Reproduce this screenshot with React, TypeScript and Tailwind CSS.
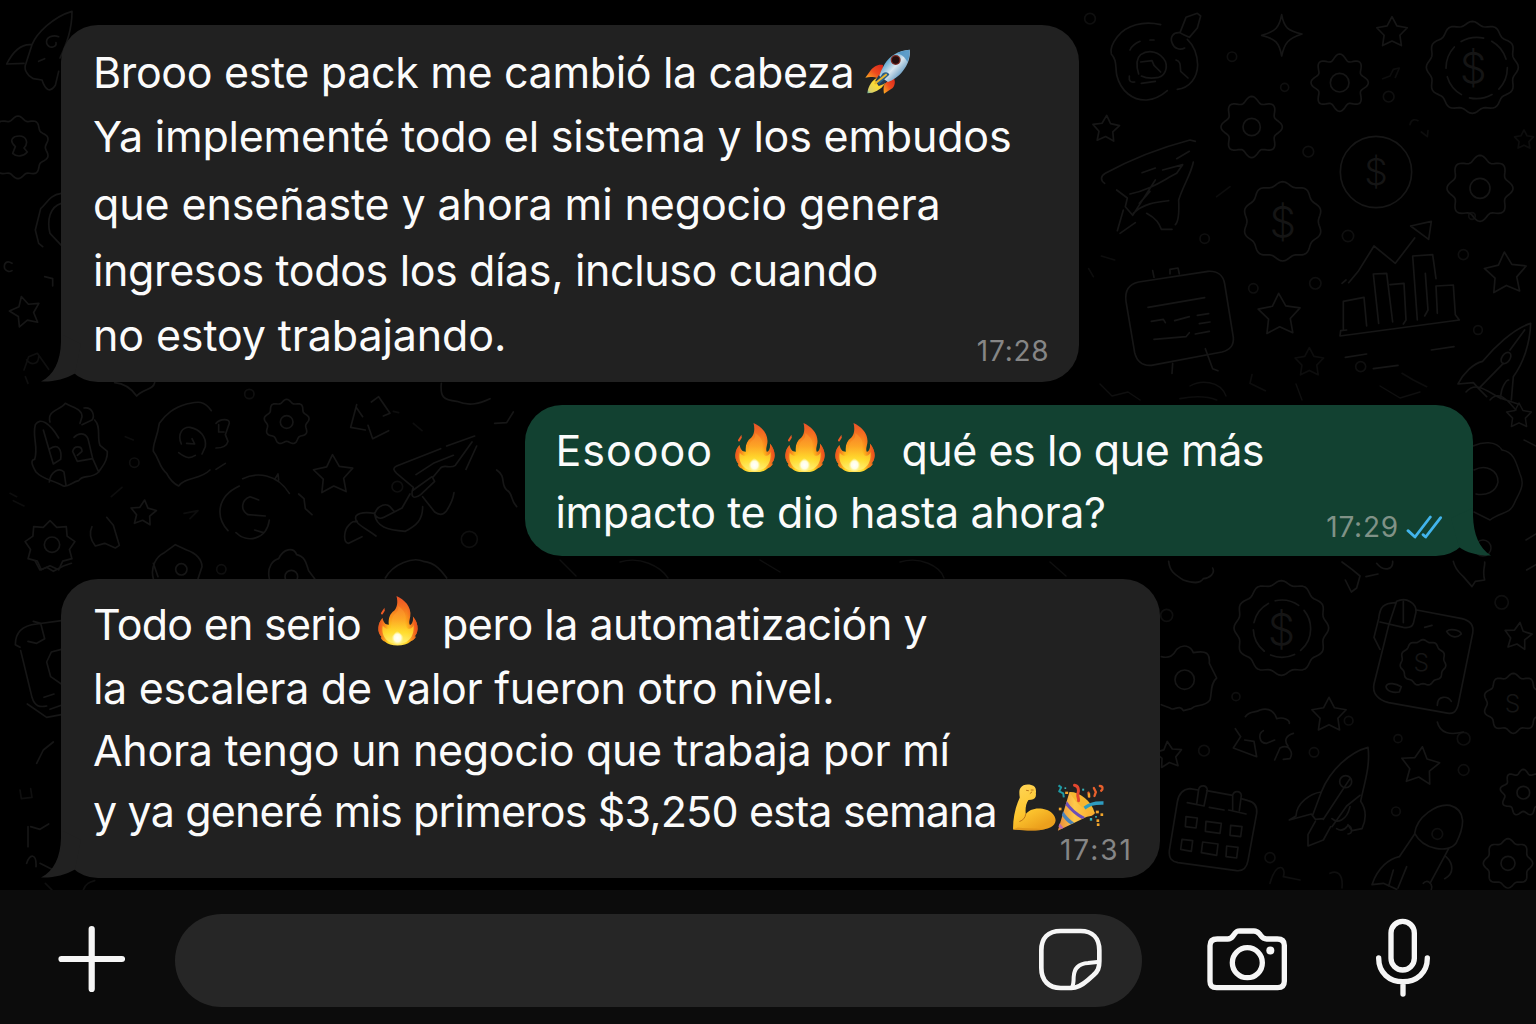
import React, { type ReactNode } from "react";

/* ---------- Wallpaper doodles ---------- */

function wavyPath(cx: number, cy: number, r: number, lobes: number, depth: number) {
  const pts: string[] = [];
  for (let i = 0; i < 120; i++) {
    const t = (i / 120) * Math.PI * 2;
    const rr = r - depth + depth * Math.cos(lobes * (t + Math.PI / 2));
    pts.push((cx + rr * Math.cos(t)).toFixed(1) + " " + (cy + rr * Math.sin(t)).toFixed(1));
  }
  return "M" + pts.join("L") + "Z";
}

function starPath(cx: number, cy: number, r: number, tips = 5, inner = 0.52, turn = 0) {
  const pts: string[] = [];
  for (let i = 0; i < tips * 2; i++) {
    const t = -Math.PI / 2 + turn + (i * Math.PI) / tips;
    const rr = i % 2 ? r * inner : r;
    pts.push((cx + rr * Math.cos(t)).toFixed(1) + " " + (cy + rr * Math.sin(t)).toFixed(1));
  }
  return "M" + pts.join("L") + "Z";
}

type GearProps = { x: number; y: number; r: number; hole?: number; n?: number; d?: number };
const Gear = ({ x, y, r, hole = 0, n = 8, d = 7 }: GearProps) => (
  <>
    <path d={wavyPath(x, y, r, n, d)} />
    {hole > 0 && <circle cx={x} cy={y} r={hole} />}
  </>
);

type StarProps = { x: number; y: number; r: number; turn?: number };
const Star = ({ x, y, r, turn = 0 }: StarProps) => <path d={starPath(x, y, r, 5, 0.52, turn)} />;

const Dollar = ({ x, y, s }: { x: number; y: number; s: number }) => (
  <text x={x} y={y + s * 0.36} fontSize={s} textAnchor="middle" fontFamily="Inter, sans-serif" fontWeight="300" fill="#151515" stroke="none">
    $
  </text>
);

const Dots = ({ at }: { at: [number, number, number][] }) => (
  <g opacity="0.7">
    {at.map(([x, y, r]) => (
      <circle key={x + "-" + y} cx={x} cy={y} r={r} />
    ))}
  </g>
);

function Wallpaper() {
  return (
    <svg className="absolute inset-0 h-full w-full" viewBox="0 0 1536 890" fill="none" stroke="#161616" strokeWidth="5" strokeLinejoin="round" strokeLinecap="round" aria-hidden="true">
      {/* upper right */}
      <g transform="translate(1080 0) scale(.33333)">
        <path d="M242 74C190 62 140 75 112 110C98 128 90 148 94 162C110 180 106 195 110 225C122 275 160 302 200 300C230 298 248 284 262 272M292 268C330 264 352 232 353 195C352 160 340 135 322 118" />
        <path d="M300 98L318 52L352 40L362 48L352 84L328 112C312 104 305 102 300 98C278 96 270 112 276 128C282 146 300 152 314 144" />
        <path d="M150 150C156 136 166 130 180 124M210 120H222M176 222C168 196 168 176 182 164C208 146 240 156 256 184C264 206 254 226 236 232C216 236 196 234 184 228M182 186L216 182L222 196L242 216M148 228C146 244 152 248 164 246M184 250L226 244M288 180C304 184 300 200 302 214L324 234" />
        <path d="M605 44C612 84 624 92 666 102C624 116 614 128 605 168C598 128 586 116 545 106C588 94 598 82 605 44Z" />
        <Star x={936} y={98} r={48} />
        <Star x={78} y={388} r={42} turn={0.05} />
        <Star x={598} y={946} r={66} turn={-0.03} />
        <Star x={1277} y={822} r={66} turn={-0.06} />
        <g opacity="0.6">
          <Star x={688} y={1088} r={45} />
          <Star x={1332} y={420} r={30} />
        </g>
        <Gear x={779} y={248} r={86} hole={28} n={8} d={9} />
        <Gear x={515} y={381} r={92} hole={26} n={8} d={9} />
        <Gear x={1200} y={565} r={99} hole={30} n={8} d={9} />
        <Gear x={1177} y={202} r={138} n={12} d={6} />
        <circle cx="1190" cy="204" r="92" strokeDasharray="70 26" />
        <Dollar x={1180} y={204} s={128} />
        <Gear x={608} y={664} r={119} n={10} d={6} />
        <Dollar x={608} y={666} s={126} />
        <circle cx="888" cy="516" r="107" />
        <Dollar x={888} y={516} s={112} />
        {/* paper plane */}
        <path d="M74 550C60 540 62 528 76 520C160 474 246 442 330 420L346 424M340 486C334 520 308 560 296 600C298 640 296 664 286 674M110 570L142 594L136 620L158 646L226 540M150 582C210 570 250 540 290 520L308 494L248 510M186 518L226 504M290 476L328 454M160 640C190 610 230 606 266 602M200 640C230 656 238 672 244 688H276M112 692L130 630M120 700L166 668M178 610L210 574" />
        {/* speech board */}
        <path d="M176 846L384 814C412 812 430 826 434 852L460 1012C462 1036 450 1050 426 1056L214 1096C186 1098 170 1082 164 1058L138 904C134 872 148 852 176 846Z" />
        <path d="M204 922L374 893M214 964L250 958L256 968M284 962L328 950M352 946L386 941M358 971L390 966M222 1018L318 1010L328 998M346 1002L388 994M222 832L218 812M270 822V808L294 804L298 822M278 1090L276 1120M376 1046L398 1106L414 1112" />
        {/* growth chart */}
        <path d="M790 986L790 904L852 892L860 978M896 970L880 822L920 820L938 966M930 854L972 850L978 960L970 972M1012 960L998 768L1058 764L1068 836M1036 820L1044 930L1034 948M1072 940L1068 858L1120 855L1126 944L1138 960L780 1008L782 992L800 990" />
        <path d="M786 850L798 840M806 848L836 812L882 738L946 790L1004 714M992 678L1054 664L1046 718L992 678M796 1072L860 1062M880 1106L954 1096M1054 1050L1122 1040" />
        {/* rocket */}
        <path d="M1352 970C1300 986 1240 1044 1208 1084C1180 1090 1150 1120 1134 1152L1180 1148L1196 1166L1270 1090M1352 970C1350 1030 1330 1090 1300 1130L1294 1200M1196 1166L1220 1190M1262 1196C1262 1160 1280 1140 1286 1140M1334 990L1290 1050" />
        <ellipse cx="1278" cy="1074" rx="12" ry="19" transform="rotate(35 1278 1074)" />
        <Dots at={[[30, 56, 16], [456, 170, 14], [614, 262, 12], [926, 290, 16], [685, 455, 16], [804, 708, 17], [520, 865, 14], [706, 850, 17], [1150, 764, 15], [1194, 990, 13], [842, 1100, 15], [1176, 648, 10], [374, 716, 14]]} />
        <path opacity="0.6" d="M908 236L930 228L940 208L958 204L946 232M990 374C994 356 1006 358 1014 362M1024 396L1042 410L1044 392M516 1124L510 1150L556 1172M300 1196C340 1188 380 1188 410 1200M64 768L104 780M26 806L40 830M410 590L450 560M966 1120L1000 1140L1040 1160" />
      </g>

      {/* middle left */}
      <g transform="translate(0 380) scale(.33333)">
        <path d="M150 126C140 90 180 92 196 70C220 84 246 86 246 110L240 130M252 84C280 80 284 110 276 120L246 134M284 120C304 140 290 170 300 196L322 214C324 246 304 262 296 276C270 300 250 280 236 302C216 306 206 322 190 318C160 300 130 300 108 276C96 256 90 240 104 238C116 200 96 170 106 134C120 110 150 130 176 174M130 150L152 226L160 252L182 238C186 210 176 190 150 206M222 172C240 154 262 160 266 184L278 236L296 276M278 236L232 244L218 214C222 196 246 196 246 214L232 226M148 306C152 272 180 262 192 276L198 316" />
        <path d="M634 92C610 58 590 66 560 72C520 84 500 100 478 130C470 180 458 190 460 214C480 240 476 260 500 280C510 300 520 310 536 318C556 290 600 300 630 270" />
        <path d="M544 192C530 160 550 140 570 142C600 148 620 170 616 200L606 222M536 218C560 236 570 236 586 226M560 190L584 192L576 176M648 130C660 116 690 114 688 130L676 164L684 184C680 200 664 204 648 204M656 134V156H672M648 268L676 250" />
        <Gear x={860} y={126} r={68} hole={19} n={9} d={5} />
        <path d="M1114 66L1136 50L1170 100L1150 108M1070 74L1052 142L1096 150M1070 84L1088 110M1104 136L1118 176L1166 152" />
        <Star x={1000} y={286} r={62} turn={-0.04} />
        <Star x={430} y={400} r={40} turn={0.1} />
        <path d="M728 296C770 276 830 280 868 340M718 318C650 350 646 410 684 452M708 458C740 490 800 480 808 420M776 360L750 350C724 360 720 390 744 404L796 408M824 298L834 282L836 300M896 342L912 356L916 386L936 404M764 450L790 458" />
        {/* rocket */}
        <path d="M1424 168L1340 198M1322 206L1190 258C1176 264 1182 272 1190 280L1240 322C1230 350 1240 360 1262 344L1304 304L1296 290L1240 330M1416 186L1366 256C1350 268 1330 250 1320 266L1300 290M1430 198L1398 268M1268 350L1304 396C1320 408 1332 402 1340 392C1354 370 1360 354 1362 338M1248 284L1300 250L1360 226M1230 342L1206 384L1152 412C1136 420 1124 408 1124 398M1086 470L1046 490C1028 488 1032 450 1046 436C1058 424 1060 424 1072 424M1128 468C1090 440 1060 430 1068 408C1080 394 1110 398 1124 400C1136 372 1160 370 1170 380L1182 394M1124 404C1130 440 1160 450 1216 454C1250 436 1268 420 1268 380" />
        <path d={starPath(150, 498, 76, 9, 0.78)} />
        <circle cx="156" cy="494" r="23" />
        <path d="M320 412L340 436L358 496L346 504L314 490L286 498C272 480 266 460 276 440" />
        <path d="M460 596C450 560 470 530 490 520L526 494L560 510C590 520 606 540 606 560L594 596M808 596C800 560 820 540 836 536C850 506 880 500 890 524C920 530 920 560 926 572L944 596M1156 594C1180 550 1240 530 1270 544C1310 548 1330 580 1340 594M344 8C370 10 390 20 410 48C430 26 460 30 464 8M1324 10C1320 50 1330 60 1370 64C1410 80 1440 70 1470 56M1490 270C1520 290 1500 310 1520 330C1540 340 1530 360 1550 380M1484 130L1520 128L1540 96" />
        <circle cx="544" cy="568" r="17" />
        <circle cx="874" cy="590" r="19" />
        <Dots at={[[403, 248, 14], [748, 42, 14], [664, 568, 14], [1408, 478, 24], [1192, 320, 16]]} />
        <path opacity="0.6" d="M30 340L50 350M40 362L72 378M334 350L366 322M376 170L400 180M552 400L594 392L570 416M1240 130L1266 152M1180 94L1196 98" />
      </g>

      {/* lower right */}
      <g transform="translate(1150 560) scale(.33333)">
        <path d="M56 4C60 40 80 46 100 60C130 70 150 72 160 56C180 54 196 40 188 24M576 6L606 28L630 48L620 84L604 96L586 60M648 50L684 42M680 10C700 36 730 30 728 4M910 4C916 30 930 40 940 50L966 80L976 64L1004 60C996 30 1006 20 1004 6M1130 30L1158 14" />
        <Gear x={394} y={204} r={142} n={12} d={6} />
        <circle cx="396" cy="206" r="86" strokeDasharray="74 22" />
        <Dollar x={394} y={208} s={130} />
        <path d="M34 290C60 296 70 286 80 268C100 250 122 258 130 278C170 270 180 280 178 310L200 354C180 370 186 400 180 420C160 444 140 430 124 446L100 452C88 430 70 456 60 444L34 434" />
        <circle cx="104" cy="359" r="29" />
        {/* banknote and coin */}
        <path d="M800 150L936 176C962 182 972 198 968 220L924 436C918 458 908 464 884 458L716 428C684 420 666 400 672 372L716 196M716 196L740 124C770 110 800 130 798 156L790 190C786 204 774 204 760 202L690 186M736 128C700 130 690 140 686 176L672 232L690 268M760 124V188" />
        <path d={wavyPath(819, 308, 69, 11, 3)} />
        <text x="814" y="334" fontSize="74" textAnchor="middle" fontFamily="Inter, sans-serif" fontWeight="300" fill="#151515" stroke="none">S</text>
        <path d="M708 380C712 364 740 372 754 380L748 396C730 400 710 394 708 380ZM890 214C900 204 930 210 934 222C920 236 900 232 890 214ZM824 202L846 196M862 486C870 520 900 526 940 516M862 436C862 404 894 408 904 424" />
        <Star x={537} y={466} r={54} />
        <Star x={1104} y={230} r={43} turn={0.14} />
        <Star x={810} y={620} r={60} turn={0.12} />
        <Star x={56} y={586} r={42} turn={-0.1} />
        <Gear x={1090} y={430} r={90} n={10} d={6} />
        <text x="1088" y="456" fontSize="74" textAnchor="middle" fontFamily="Inter, sans-serif" fontWeight="300" fill="#151515" stroke="none">S</text>
        <Gear x={1120} y={698} r={70} hole={19} n={9} d={7} />
        <Gear x={1074} y={910} r={74} hole={21} n={8} d={6} />
        <path d="M286 470C300 450 316 460 330 450C360 440 376 460 380 476C400 470 420 480 418 490M256 506L272 530L250 564L320 590L312 544L284 540M430 520C410 526 400 540 414 558M340 512C324 520 326 550 350 550L374 540M374 600L390 564C420 550 430 580 420 596L400 598" />
        {/* calendar */}
        <path d="M144 690L120 686C96 688 86 702 82 726L58 872C56 896 66 904 84 908L260 932C280 934 290 924 294 902L320 760C322 740 314 726 294 722L274 716M170 692L248 706M112 728L162 738L172 690C170 674 150 674 146 688L140 732M178 742L222 750M236 750L288 762M248 752V706C252 690 272 692 274 706L268 752" />
        <path d="M108 770L142 774L138 804L106 800ZM168 784L214 790L210 820L166 814ZM242 796L276 800L272 830L240 826ZM96 838L128 842L124 874L92 868ZM158 846L204 852L200 886L154 878ZM230 858L264 862L260 894L228 890Z" />
        {/* rockets */}
        <path d="M654 562C600 576 540 630 514 696C480 700 440 730 438 768L418 780L484 762L496 778L520 776M654 562C662 620 640 680 632 724C650 750 648 780 636 806L606 812L594 794M514 696L488 766M520 778L600 656M546 800L590 738L630 706M496 784L474 824V858L520 840L542 800M546 776C560 790 590 784 600 740M560 806C580 820 590 800 594 796C606 800 610 820 594 822" />
        <circle cx="587" cy="665" r="18" />
        <path d="M794 820C800 770 860 730 900 736C950 750 944 800 918 850C896 880 820 870 794 820ZM794 822L748 890C720 896 684 920 666 974L700 970L740 988M896 866L840 970M888 890C910 910 914 940 884 956M730 930L716 978M770 920L744 984M820 970C830 956 850 970 844 988" />
        <path opacity="0.7" d="M360 970C380 900 410 920 400 950L450 960M540 940C560 930 580 940 576 984" />
        <Dots at={[[1055, 127, 20], [941, 536, 19], [941, 630, 16], [744, 536, 12], [738, 754, 13], [258, 410, 12], [360, 893, 15], [596, 482, 13], [492, 577, 14], [162, 572, 16], [50, 166, 18], [862, 822, 16]]} />
      </g>

      {/* left edge */}
      <g transform="scale(.33333)">
        <path d="M216 34C160 50 110 100 96 134C60 130 36 160 20 192L72 190M216 34C216 90 200 130 180 174M96 134L78 190C70 206 80 226 100 236L126 240C136 270 150 280 166 256L176 214M140 130C136 110 160 104 176 110M140 130C150 150 170 140 168 128M116 184L134 176" />
        <Gear x={54} y={442} r={94} n={10} d={6} />
        <path d="M38 460L46 440C24 420 40 408 58 408C80 408 86 430 72 444L82 456C70 470 50 472 38 460ZM184 580C150 584 140 610 122 626L106 690L116 730L128 740M184 610C150 620 140 660 150 700L184 736M36 790C20 780 10 790 14 806C20 816 30 816 36 812M134 830L158 836V858" />
        <Star x={76} y={936} r={48} turn={-0.25} />
        <path opacity="0.7" d="M72 1110L86 1070L112 1060L146 1108M84 1150L76 1130M80 1080C96 1100 116 1090 116 1070" />
      </g>
      <g transform="translate(0 560) scale(.33333)">
        <path d="M106 4L120 30L140 22L160 34L190 18L214 10M184 182L110 192C70 196 46 214 46 254L60 262M100 184L122 190L134 236L110 250L84 244M62 272L96 412C104 440 120 442 140 438M184 268L154 276L140 306L152 350L184 372M82 432L140 472L184 464M132 412L162 402M150 448L184 436M110 610L130 570L160 546M84 800V860M92 800L120 808L146 792M80 910C90 880 110 880 108 920M120 910L160 930M460 10L474 50" />
        <path opacity="0.7" d="M60 690L64 716L96 712L92 686M136 970L156 990M250 990C256 970 270 966 284 962" />
      </g>

      {/* right edge */}
      <g strokeWidth="1.5">
        <path d="M1473 446C1482 442 1496 440 1502 450C1514 452 1516 462 1520 474C1526 486 1518 494 1514 504C1510 514 1500 512 1490 520L1474 512M1474 470C1486 464 1498 470 1498 482C1496 492 1486 496 1476 494M1490 400C1500 388 1510 404 1516 410M1524 440L1536 446M1466 392C1476 380 1488 392 1500 398L1518 404M1526 540L1536 534" />
        <path d={starPath(1519, 416, 13)} />
        <circle cx="1483" cy="548" r="8" />
      </g>
      <g strokeWidth="1.4" opacity="0.7">
        <path d="M1100 384L1112 396L1128 392L1140 400M1190 386C1200 380 1220 380 1226 396M1296 384L1302 400M1380 386L1400 398L1420 392M560 560L576 576M620 562C640 556 660 566 668 578M760 560L780 572M900 562C920 556 940 566 944 578M1050 562L1066 576" />
      </g>
    </svg>
  );
}

/* ---------- Emoji ---------- */

const FireDefs = () => (
  <svg className="absolute h-0 w-0" aria-hidden="true">
    <defs>
      <radialGradient id="fireOuter" gradientUnits="userSpaceOnUse" cx="58" cy="128" r="128">
        <stop offset="0" stopColor="#fff3a0" />
        <stop offset=".25" stopColor="#ffd61f" />
        <stop offset=".5" stopColor="#fb9a1c" />
        <stop offset=".8" stopColor="#f26a21" />
        <stop offset="1" stopColor="#e9502a" />
      </radialGradient>
      <linearGradient id="fireInner" x1="0" y1="0" x2="0" y2="1">
        <stop offset="0" stopColor="#f9832a" />
        <stop offset=".35" stopColor="#fda526" />
        <stop offset=".7" stopColor="#ffdc2e" />
        <stop offset="1" stopColor="#fff27a" />
      </linearGradient>
      <radialGradient id="fireCore">
        <stop offset="0" stopColor="#ffffff" />
        <stop offset=".55" stopColor="#fffde0" />
        <stop offset="1" stopColor="#fff27a" stopOpacity="0" />
      </radialGradient>
      <linearGradient id="fireEdge" x1="0" y1="0" x2="1" y2="0">
        <stop offset="0" stopColor="#e8401f" />
        <stop offset=".25" stopColor="#e8401f" stopOpacity="0" />
        <stop offset=".72" stopColor="#e8401f" stopOpacity="0" />
        <stop offset="1" stopColor="#e8371d" />
      </linearGradient>
    </defs>
  </svg>
);

const fireShape =
  "M55 0C78 10 101 32 96 62C94 72 91 79 95 87C103 84 106 73 104 61C113 72 119 84 118 99C117 110 114 116 109 121L113 122C108 130 104 133 98 135C88 144 74 148 58 148C42 148 28 144 20 136C14 134 11 130 8 124L11 123C3 115 0 105 1 94C2 82 7 73 13 66C16 78 20 86 32 86C30 66 36 52 48 44C57 34 60 20 55 0Z";

const Fire = ({ className = "" }: { className?: string }) => (
  <svg className={"h-[49.5px] w-[40px] shrink-0 " + className} viewBox="0 0 119 148" role="img" aria-label="🔥">
    <path d={fireShape} fill="url(#fireOuter)" />
    <path d={fireShape} fill="url(#fireEdge)" opacity=".8" />
    <path d="M60 30C74 40 86 52 82 74C80 88 86 100 94 98C102 96 104 92 106 86C108 108 102 126 86 136C70 144 46 144 32 136C16 126 10 108 14 88C20 98 30 100 38 96C42 78 40 62 50 54C58 47 62 42 60 30Z" fill="url(#fireInner)" opacity=".88" />
    <path d="M57 104C66 112 78 118 77 131C75 142 67 147 58 147C49 147 40 142 39 131C39 119 50 113 57 104Z" fill="url(#fireCore)" />
    <path d="M19 35L20 44L13 55C9 56 8 53 9 50Z" fill="#ef5a24" />
  </svg>
);

const Rocket = ({ className = "" }: { className?: string }) => (
  <svg className={"h-[45px] w-[46px] shrink-0 " + className} viewBox="77 55 138 135" role="img" aria-label="🚀">
    <defs>
      <linearGradient id="rkBody" x1="0" y1="0" x2="1" y2="1">
        <stop offset="0" stopColor="#3d86b8" />
        <stop offset=".3" stopColor="#63a9d2" />
        <stop offset=".52" stopColor="#d9e6ee" />
        <stop offset=".75" stopColor="#6b9fc4" />
        <stop offset="1" stopColor="#24517a" />
      </linearGradient>
      <linearGradient id="rkFin" x1="1" y1="0" x2="0" y2="1">
        <stop offset="0" stopColor="#d8261c" />
        <stop offset=".5" stopColor="#ee4a1e" />
        <stop offset="1" stopColor="#fbb021" />
      </linearGradient>
      <linearGradient id="rkFlame" x1="1" y1="0" x2="0" y2="1">
        <stop offset="0" stopColor="#e88d1c" />
        <stop offset=".5" stopColor="#fbdc34" />
        <stop offset=".85" stopColor="#d9cf6a" />
        <stop offset="1" stopColor="#5bb0a8" />
      </linearGradient>
    </defs>
    <path d="M131 103C116 100 102 108 92 122L78 141C92 138 106 139 116 143L130 122Z" fill="url(#rkFin)" />
    <path d="M163 140C168 152 168 162 160 172L134 189C132 178 132 168 136 160L150 146Z" fill="url(#rkFin)" />
    <path d="M112 142C98 150 86 166 84 188C104 188 124 178 138 158L128 140Z" fill="url(#rkFlame)" />
    <path d="M118 134L108 150L118 166L134 160L148 146Z" fill="#233a52" />
    <path d="M211 57C180 58 150 76 136 100C128 114 122 128 120 136L146 154C160 150 178 138 190 122C206 102 214 78 211 57Z" fill="url(#rkBody)" />
    <path d="M211 57C198 58 184 62 172 68C184 70 198 80 204 94C210 82 212 70 211 57Z" fill="#4a90c2" opacity=".85" />
    <path d="M130 128C138 122 148 124 150 132L120 160L112 156Z" fill="#2c5f86" />
    <path d="M140 132L108 158" stroke="#e9b52d" strokeWidth="6" strokeLinecap="round" />
    <circle cx="169" cy="88" r="15" fill="#7d2a22" />
    <circle cx="169" cy="88" r="11" fill="#240d0d" />
  </svg>
);

const Muscle = ({ className = "" }: { className?: string }) => (
  <svg className={"h-[46.5px] w-[44px] shrink-0 " + className} viewBox="67 42 131 139" role="img" aria-label="💪">
    <defs>
      <linearGradient id="arm" x1="0" y1="0" x2=".5" y2="1">
        <stop offset="0" stopColor="#ffd65a" />
        <stop offset=".6" stopColor="#fdc62f" />
        <stop offset="1" stopColor="#eca01c" />
      </linearGradient>
    </defs>
    <path d="M92 54C98 44 112 42 124 45C136 47 140 56 138 70C140 82 134 88 124 89L116 90C108 100 106 118 108 132C116 120 136 112 158 116C182 120 198 136 197 152C195 168 176 178 148 180C118 182 88 179 70 178C69 150 76 112 90 82C88 70 88 60 92 54Z" fill="url(#arm)" />
    <path d="M108 132C106 144 100 150 90 154M110 61L116 62M121 70L126 66M124 60L130 60" fill="none" stroke="#b56a12" strokeWidth="2.6" strokeLinecap="round" />
    <path d="M70 178C96 182 150 183 176 174C150 178 110 174 84 172Z" fill="#d98a18" opacity=".6" />
  </svg>
);

const Party = ({ className = "" }: { className?: string }) => (
  <svg className={"h-[48px] w-[49px] shrink-0 " + className} viewBox="204 37 144 144" role="img" aria-label="🎉">
    <defs>
      <linearGradient id="cone" x1="0" y1=".5" x2="1" y2=".5">
        <stop offset="0" stopColor="#e8893a" />
        <stop offset=".45" stopColor="#ffc94a" />
        <stop offset="1" stopColor="#f6a92c" />
      </linearGradient>
    </defs>
    <path d="M243 64C262 72 300 94 319 128C312 138 302 136 292 140L208 180Z" fill="url(#cone)" />
    <path d="M235 92L231 103C246 121 262 135 280 145L290 140C266 128 248 112 235 92Z" fill="#6c4fb8" />
    <path d="M224 122L220 134C228 146 236 154 246 161L257 156C244 147 232 136 224 122Z" fill="#4b83b8" />
    <path d="M213 158L210 168L219 175L225 171Z" fill="#c06aa8" />
    <path d="M243 64C268 62 308 86 319 128C296 124 262 100 243 64Z" fill="#f6b731" />
    <path d="M258 44C270 46 272 58 268 70C266 80 272 84 270 90" fill="none" stroke="#e3472f" strokeWidth="9" strokeLinecap="round" />
    <path d="M288 112C300 104 310 96 345 97" fill="none" stroke="#2e9cc0" strokeWidth="10" strokeLinejoin="round" />
    <path d="M210 44L218 50L212 62L224 68L226 80" fill="none" stroke="#1f9aa5" strokeWidth="6" strokeLinejoin="round" />
    <path d="M316 52L322 64L318 76M334 46C344 46 344 56 338 60M300 66L302 78" fill="none" stroke="#e8602c" strokeWidth="7" strokeLinecap="round" />
    <g fill="#f3a62b">
      <rect x="230" y="63" width="9" height="7" />
      <rect x="298" y="68" width="7" height="12" />
      <rect x="211" y="111" width="8" height="8" />
      <rect x="322" y="120" width="9" height="8" />
      <rect x="336" y="128" width="8" height="8" />
      <rect x="324" y="146" width="8" height="8" />
      <rect x="325" y="158" width="8" height="8" />
    </g>
    <g fill="#38b1b8">
      <rect x="281" y="54" width="6" height="6" />
      <rect x="304" y="142" width="7" height="8" />
      <rect x="228" y="50" width="5" height="5" />
      <rect x="320" y="136" width="5" height="5" />
    </g>
  </svg>
);

/* ---------- Bubble parts ---------- */

const TailLeft = () => (
  <svg className="absolute bottom-0 left-[-20px] h-[48px] w-[56px]" viewBox="0 0 56 48" fill="#212121" aria-hidden="true">
    <path d="M20 0V8C19.500 27 13 41 0 47.500C13 48 24 45 34 39.500L40 10Z" />
  </svg>
);

const TailRight = () => (
  <svg className="absolute right-[-18px] bottom-0 h-[48px] w-[56px]" viewBox="0 0 56 48" fill="#124131" aria-hidden="true">
    <path d="M38 0V8C38.500 26 44 40 56 47.500C44 48 32 45 24 39L16 10Z" />
  </svg>
);

const Line = ({ className = "", children }: { className?: string; children: ReactNode }) => (
  <div className={"flex h-[60px] items-center text-[43px] leading-[60px] whitespace-pre text-[#fbfbfb] " + className}>{children}</div>
);

const Ticks = () => (
  <svg className="h-[24px] w-[37px]" viewBox="318 70 111 72" fill="none" stroke="#42b4ec" strokeWidth="8.500" strokeLinecap="round" strokeLinejoin="round" aria-label="Leído">
    <path d="M324 117L345 136L391 76" />
    <path d="M369 129L377 136L422 78" />
  </svg>
);

export default function App() {
  return (
    <div className="flex h-[1024px] w-[1536px] flex-col overflow-hidden bg-black font-['Inter','Liberation_Sans',sans-serif]">
      <main className="relative h-[890px] shrink-0">
        <Wallpaper />
        <FireDefs />
        <div className="relative flex flex-col pt-[25px] pr-[63px] pl-[61px]">
          <section className="relative h-[356.500px] w-[1017.500px] rounded-[37px] bg-[#212121] pt-[17px] pl-[32px]">
            <TailLeft />
            <Line>
              <span className="tracking-[-0.350px]">Brooo este pack me cambió la cabeza</span>
              <Rocket className="mb-[2px] ml-[11px]" />
            </Line>
            <Line className="mt-[4px] tracking-[-0.210px]">Ya implementé todo el sistema y los embudos</Line>
            <Line className="mt-[8px] tracking-[-0.120px]">que enseñaste y ahora mi negocio genera</Line>
            <Line className="mt-[6px] tracking-[-0.380px]">ingresos todos los días, incluso cuando</Line>
            <Line className="mt-[5px] tracking-[-0.120px]">no estoy trabajando.</Line>
            <time className="absolute right-[29px] bottom-[15px] text-[28px] leading-[32px] tracking-[0.800px] text-[#868686]">17:28</time>
          </section>

          <section className="relative mt-[23.500px] h-[151px] w-[948px] self-end rounded-[37px] bg-[#124131] pt-[15px] pl-[30.500px]">
            <TailRight />
            <Line>
              <span className="tracking-[0.950px]">Esoooo</span>
              <span className="mb-[5px] ml-[22.500px] flex gap-[10px]">
                <Fire />
                <Fire />
                <Fire />
              </span>
              <span className="ml-[26px] tracking-[-0.460px]">qué es lo que más</span>
            </Line>
            <Line className="mt-[2px] tracking-[-0.400px]">impacto te dio hasta ahora?</Line>
            <div className="absolute right-[30px] bottom-[13px] flex items-center gap-[7px]">
              <time className="text-[28px] leading-[32px] tracking-[0.800px] text-[#809287]">17:29</time>
              <Ticks />
            </div>
          </section>

          <section className="relative mt-[22.500px] h-[299.500px] w-[1099px] rounded-[37px] bg-[#212121] pt-[15.500px] pl-[32px]">
            <TailLeft />
            <Line>
              <span className="tracking-[-0.750px]">Todo en serio</span>
              <Fire className="mb-[6px] ml-[17px]" />
              <span className="ml-[24px] tracking-[-0.500px]">pero la automatización y</span>
            </Line>
            <Line className="mt-[4px] tracking-[-0.300px]">la escalera de valor fueron otro nivel.</Line>
            <Line className="mt-[2px] tracking-[-0.310px]">Ahora tengo un negocio que trabaja por mí</Line>
            <Line className="mt-px">
              <span className="tracking-[-0.860px]">y ya generé mis primeros $3,250 esta semana</span>
              <Muscle className="mb-[7px] ml-[15px]" />
              <Party className="mb-[8px]" />
            </Line>
            <time className="absolute right-[27px] bottom-[12px] text-[28px] leading-[32px] tracking-[2px] text-[#868686]">17:31</time>
          </section>
        </div>
      </main>

      <footer className="flex h-[134px] shrink-0 items-start bg-[#0c0c0c] pt-[23.500px] pl-[57px]">
        <button className="mt-[11px] h-[68px] w-[68px]" aria-label="Adjuntar">
          <svg className="h-[68px] w-[68px]" viewBox="0 0 68 68" fill="none" stroke="#f6f6f6" strokeWidth="6.200" strokeLinecap="round">
            <path d="M4.500 34H65M34.700 4V64" />
          </svg>
        </button>
        <div className="ml-[50px] flex h-[93px] w-[967px] justify-end rounded-full bg-[#262626] pt-[13px] pr-[38.500px]">
          <svg className="h-[64px] w-[66px]" viewBox="112 112 198 192" fill="none" stroke="#f6f6f6" strokeWidth="14" strokeLinecap="round" strokeLinejoin="round" aria-label="Stickers">
            <path d="M296 215V182C296 145 275 124 240 124H180C142 124 122 146 122 182V235C122 273 145 295 180 295H212C232 295 245 286 262 271L278 257C292 244 296 235 296 215Z" />
            <path strokeWidth="12" d="M290 217L262 220C232 222 220 238 219 262C219 275 218 286 214 293" />
          </svg>
        </div>
        <svg className="mt-[13px] ml-[64px] h-[66px] w-[82px]" viewBox="618 110 246 198" fill="none" stroke="#f6f6f6" strokeWidth="16" strokeLinejoin="round" aria-label="Cámara">
          <path d="M652 146H683C697 146 697 138 704 130C710 122 712 122 720 122H762C770 122 772 123 778 130C786 140 787 146 800 146H832C846 146 853 152 853 165V273C853 286 846 292 833 292H650C636 292 630 286 630 273V166C630 152 638 146 652 146Z" />
          <circle cx="742" cy="217" r="45" />
          <circle cx="811" cy="180.500" r="12" fill="#f6f6f6" stroke="none" />
        </svg>
        <svg className="mt-[2px] ml-[86px] h-[82px] w-[58px]" viewBox="1122 79 174 246" fill="none" stroke="#f6f6f6" strokeWidth="16" strokeLinecap="round" aria-label="Grabar audio">
          <rect x="1173" y="95" width="70" height="146" rx="35" />
          <path d="M1136 205C1136 250 1168 276 1209 276C1250 276 1282 250 1282 205M1209 278V313" />
        </svg>
      </footer>
    </div>
  );
}
